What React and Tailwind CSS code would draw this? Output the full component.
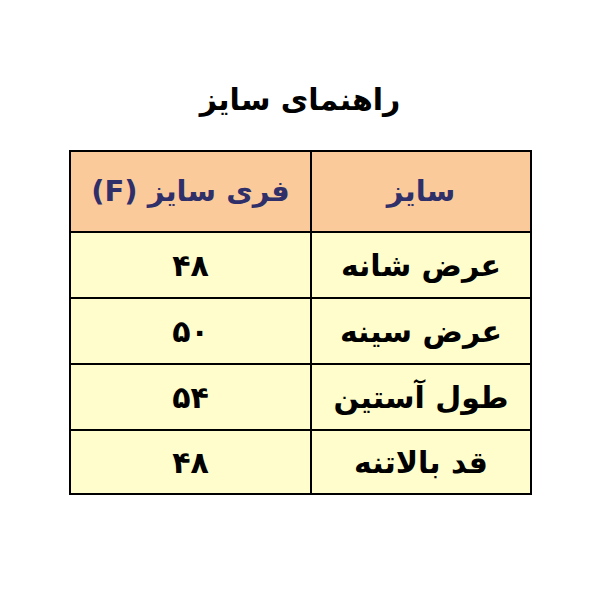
const rows = [
  ["عرض شانه", "۴۸"],
  ["عرض سینه", "۵۰"],
  ["طول آستین", "۵۴"],
  ["قد بالاتنه", "۴۸"],
];

export default function App() {
  return (
    <div
      dir="rtl"
      className="w-[600px] h-[600px] bg-white flex flex-col items-center"
      style={{ fontFamily: '"DejaVu Sans", "Noto Sans", sans-serif' }}
    >
      <h1 className="mt-[80px] text-[30px] font-bold text-black leading-[40px]">راهنمای سایز</h1>
      <div className="mt-[30px] ml-[1px] w-[463px] border-2 border-black">
        <div className="grid grid-cols-[220px_1fr] bg-[#fbca9b] h-[81px] border-b-2 border-black">
          <div className="flex items-center justify-center border-l-2 border-black text-[#2f2f6a] text-[29px] font-bold">
            سایز
          </div>
          <div className="flex items-center justify-center text-[#2f2f6a] text-[29px] font-bold">
            فری سایز (F)
          </div>
        </div>
        {rows.map(([label, value], i) => (
          <div
            key={i}
            className={
              i < rows.length - 1
                ? "grid grid-cols-[220px_1fr] bg-[#fffdcb] h-[66px] border-b-2 border-black"
                : "grid grid-cols-[220px_1fr] bg-[#fffdcb] h-[62px]"
            }
          >
            <div className="flex items-center justify-center border-l-2 border-black text-black text-[30px] font-bold">
              {label}
            </div>
            <div className="flex items-center justify-center text-black text-[30px] font-bold">
              {value}
            </div>
          </div>
        ))}
      </div>
    </div>
  );
}
